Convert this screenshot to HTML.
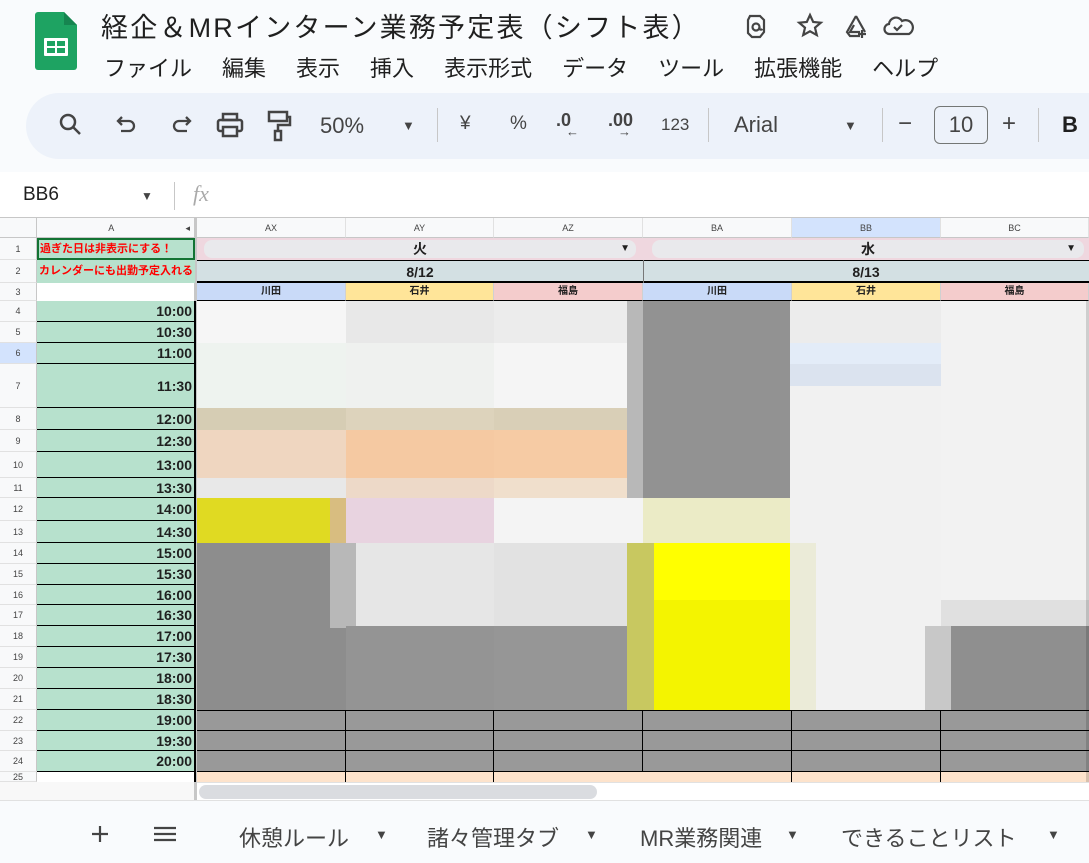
<!DOCTYPE html>
<html><head><meta charset="utf-8"><style>
*{margin:0;padding:0;box-sizing:border-box}
body{width:1089px;height:863px;overflow:hidden;background:#f9fbfd;font-family:"Liberation Sans","Noto Sans CJK JP",sans-serif;position:relative;color:#1f1f1f}
.a{position:absolute}
.t{font-size:27px;color:#1f1f1f;white-space:nowrap;letter-spacing:2.2px}
.m{font-size:22px;color:#1f1f1f;white-space:nowrap}
.m span{margin-right:30px}
.rh{position:absolute;left:0;width:37px;font-size:9px;color:#444;text-align:center;background:#f8f9fa;border-bottom:1px solid #e1e1e1;border-right:1px solid #c7c7c7;display:flex;align-items:center;justify-content:center}
.tm{position:absolute;left:37px;width:158px;background:#b7e1cd;border-bottom:1px solid #000;text-align:right;font-weight:bold;font-size:14px;padding-right:3px;display:flex;align-items:center;justify-content:flex-end}
.ch{position:absolute;top:218px;height:20px;font-size:9px;color:#444;text-align:center;line-height:20px;background:#f8f9fa;border-right:1px solid #e1e1e1;border-bottom:1px solid #c7c7c7}
.nm{position:absolute;top:283px;height:18px;font-size:10px;font-weight:bold;text-align:center;line-height:18px;border-right:1px solid #d0d0d0;border-bottom:1px solid #000}
.tab{position:absolute;top:821px;font-size:22px;color:#444;white-space:nowrap}
.tab i{font-style:normal;font-size:13px;position:absolute;top:6px}
</style></head><body>
<div class="a" style="left:35px;top:12px;width:42px;height:58px">
<svg width="42" height="58"><path d="M3 0h26l13 13v42a3 3 0 0 1-3 3H3a3 3 0 0 1-3-3V3a3 3 0 0 1 3-3z" fill="#1ea362"/><path d="M29 0v13h13z" fill="#168550"/><rect x="9" y="26" width="24" height="18" rx="1" fill="#fff"/><rect x="12" y="29" width="8" height="5" fill="#1ea362"/><rect x="22" y="29" width="8" height="5" fill="#1ea362"/><rect x="12" y="36" width="8" height="5" fill="#1ea362"/><rect x="22" y="36" width="8" height="5" fill="#1ea362"/></svg></div>
<div class="a t" style="left:101px;top:6px">経企＆MRインターン業務予定表（シフト表）</div>
<svg class="a" style="left:744px;top:12px" width="170" height="30" fill="none" stroke="#444" stroke-width="2.2">
<path d="M6 4h10l4 4v12l-4 5H8l-4-4V8z"/><circle cx="12" cy="15" r="3.5"/><path d="M15.5 15v2a2 2 0 0 0 3 0"/>
<path d="M66 3l3.2 7 7.6.7-5.8 5 1.8 7.4L66 19.3l-6.8 3.8 1.8-7.4-5.8-5 7.6-.7z"/>
<path d="M112 4l-9 16 3 4h10M112 4l9 16M110 13l-4 7h10"/><path d="M118 18v8M114 22h8"/>
<path d="M165 22h-19a5 5 0 0 1-1-10 7 7 0 0 1 13-3 6 6 0 0 1 7 13z"/><path d="M150 15l3 3 5-5"/>
</svg>
<div class="a m" style="left:104px;top:51px"><span>ファイル</span><span>編集</span><span>表示</span><span>挿入</span><span>表示形式</span><span>データ</span><span>ツール</span><span>拡張機能</span>ヘルプ</div>
<div class="a" style="left:26px;top:93px;width:1100px;height:66px;border-radius:33px;background:#edf2fa"></div>
<div class="a" style="left:58px;top:112px">
<svg width="26" height="26"><circle cx="10" cy="10" r="7" fill="none" stroke="#444" stroke-width="2.5"/><path d="M15 15l7 7" stroke="#444" stroke-width="2.5"/></svg></div>
<svg class="a" style="left:114px;top:113px" width="80" height="26" fill="none" stroke="#444" stroke-width="2.3"><path d="M4 8h11a5 5 0 0 1 0 10H7"/><path d="M8 4L4 8l4 4"/><path d="M76 8H65a5 5 0 0 0 0 10h8"/><path d="M72 4l4 4-4 4"/></svg>
<div class="a" style="left:216px;top:112px"><svg width="28" height="26"><rect x="7" y="2" width="14" height="6" fill="none" stroke="#444" stroke-width="2.5"/><rect x="2" y="8" width="24" height="11" rx="2" fill="none" stroke="#444" stroke-width="2.5"/><rect x="7" y="15" width="14" height="9" fill="#edf2fa" stroke="#444" stroke-width="2.5"/></svg></div>
<div class="a" style="left:266px;top:110px"><svg width="26" height="32"><rect x="3" y="2" width="18" height="9" fill="none" stroke="#444" stroke-width="2.5"/><path d="M21 7h3v8H12v6" fill="none" stroke="#444" stroke-width="2.5"/><rect x="9" y="21" width="6" height="9" fill="none" stroke="#444" stroke-width="2.5"/></svg></div>
<div class="a" style="left:320px;top:113px;font-size:22px;color:#444">50%</div>
<div class="a" style="left:402px;top:118px;font-size:13px;color:#444">▼</div>
<div class="a" style="left:437px;top:108px;width:1px;height:34px;background:#c7c7c7"></div>
<div class="a" style="left:460px;top:113px;font-size:19px;color:#444">¥</div>
<div class="a" style="left:510px;top:113px;font-size:19px;color:#444">%</div>
<div class="a" style="left:556px;top:110px;font-size:18px;color:#444;font-weight:bold">.0</div>
<div class="a" style="left:566px;top:124px;font-size:13px;color:#444">←</div>
<div class="a" style="left:608px;top:110px;font-size:18px;color:#444;font-weight:bold">.00</div>
<div class="a" style="left:618px;top:124px;font-size:13px;color:#444">→</div>
<div class="a" style="left:661px;top:115px;font-size:17px;color:#444">123</div>
<div class="a" style="left:708px;top:108px;width:1px;height:34px;background:#c7c7c7"></div>
<div class="a" style="left:734px;top:112px;font-size:22px;color:#444">Arial</div>
<div class="a" style="left:844px;top:118px;font-size:13px;color:#444">▼</div>
<div class="a" style="left:882px;top:108px;width:1px;height:34px;background:#c7c7c7"></div>
<div class="a" style="left:898px;top:110px;font-size:24px;color:#444">−</div>
<div class="a" style="left:934px;top:106px;width:54px;height:38px;border:1px solid #747775;border-radius:6px;font-size:22px;color:#444;text-align:center;line-height:36px">10</div>
<div class="a" style="left:1002px;top:110px;font-size:24px;color:#444">+</div>
<div class="a" style="left:1038px;top:108px;width:1px;height:34px;background:#c7c7c7"></div>
<div class="a" style="left:1062px;top:112px;font-size:22px;color:#1f1f1f;font-weight:bold">B</div>
<div class="a" style="left:0;top:172px;width:1089px;height:46px;background:#fff;border-bottom:1px solid #c7c7c7"></div>
<div class="a" style="left:23px;top:184px;font-size:19px">BB6</div>
<div class="a" style="left:141px;top:189px;font-size:12px;color:#444">▼</div>
<div class="a" style="left:174px;top:182px;width:1px;height:28px;background:#c7c7c7"></div>
<div class="a" style="left:193px;top:181px;font-size:22px;color:#aaa;font-style:italic;font-family:'Liberation Serif',serif">fx</div>
<div class="a" style="left:0;top:218px;width:1089px;height:564px;background:#fff"></div>
<div class="a" style="left:0;top:218px;width:37px;height:20px;background:#f8f9fa;border-right:1px solid #c7c7c7;border-bottom:1px solid #c7c7c7"></div>
<div class="ch" style="left:37px;width:158px">A<span style="float:right;margin-right:4px">◂</span></div>
<div class="ch" style="left:197px;width:149px">AX</div>
<div class="ch" style="left:346px;width:148px">AY</div>
<div class="ch" style="left:494px;width:149px">AZ</div>
<div class="ch" style="left:643px;width:149px">BA</div>
<div class="ch" style="left:792px;width:149px;background:#d3e3fd">BB</div>
<div class="ch" style="left:941px;width:148px">BC</div>
<div class="a" style="left:194px;top:218px;width:3px;height:582px;background:#c7c7c7"></div>
<div class="rh" style="top:238px;height:22px">1</div>
<div class="rh" style="top:260px;height:23px">2</div>
<div class="rh" style="top:283px;height:18px">3</div>
<div class="rh" style="top:301px;height:21px">4</div>
<div class="rh" style="top:322px;height:21px">5</div>
<div class="rh" style="top:343px;height:21px;background:#d3e3fd">6</div>
<div class="rh" style="top:364px;height:44px">7</div>
<div class="rh" style="top:408px;height:22px">8</div>
<div class="rh" style="top:430px;height:22px">9</div>
<div class="rh" style="top:452px;height:26px">10</div>
<div class="rh" style="top:478px;height:20px">11</div>
<div class="rh" style="top:498px;height:23px">12</div>
<div class="rh" style="top:521px;height:22px">13</div>
<div class="rh" style="top:543px;height:21px">14</div>
<div class="rh" style="top:564px;height:21px">15</div>
<div class="rh" style="top:585px;height:20px">16</div>
<div class="rh" style="top:605px;height:21px">17</div>
<div class="rh" style="top:626px;height:21px">18</div>
<div class="rh" style="top:647px;height:21px">19</div>
<div class="rh" style="top:668px;height:21px">20</div>
<div class="rh" style="top:689px;height:21px">21</div>
<div class="rh" style="top:710px;height:21px">22</div>
<div class="rh" style="top:731px;height:20px">23</div>
<div class="rh" style="top:751px;height:21px">24</div>
<div class="rh" style="top:772px;height:10px;align-items:flex-start;line-height:10px">25</div>
<div class="a" style="left:37px;top:238px;width:158px;height:22px;background:#b7e1cd;border:2px solid #137333;color:#f00;font-size:11px;font-weight:bold;line-height:18px;padding-left:1px;white-space:nowrap">過ぎた日は非表示にする！</div>
<div class="a" style="left:37px;top:260px;width:158px;height:23px;background:#b7e1cd;color:#f00;font-size:11px;font-weight:bold;line-height:23px;padding-left:2px;white-space:nowrap;overflow:hidden">カレンダーにも出勤予定入れる</div>
<div class="tm" style="top:301px;height:21px">10:00</div>
<div class="tm" style="top:322px;height:21px">10:30</div>
<div class="tm" style="top:343px;height:21px">11:00</div>
<div class="tm" style="top:364px;height:44px">11:30</div>
<div class="tm" style="top:408px;height:22px">12:00</div>
<div class="tm" style="top:430px;height:22px">12:30</div>
<div class="tm" style="top:452px;height:26px">13:00</div>
<div class="tm" style="top:478px;height:20px">13:30</div>
<div class="tm" style="top:498px;height:23px">14:00</div>
<div class="tm" style="top:521px;height:22px">14:30</div>
<div class="tm" style="top:543px;height:21px">15:00</div>
<div class="tm" style="top:564px;height:21px">15:30</div>
<div class="tm" style="top:585px;height:20px">16:00</div>
<div class="tm" style="top:605px;height:21px">16:30</div>
<div class="tm" style="top:626px;height:21px">17:00</div>
<div class="tm" style="top:647px;height:21px">17:30</div>
<div class="tm" style="top:668px;height:21px">18:00</div>
<div class="tm" style="top:689px;height:21px">18:30</div>
<div class="tm" style="top:710px;height:21px">19:00</div>
<div class="tm" style="top:731px;height:20px">19:30</div>
<div class="tm" style="top:751px;height:21px">20:00</div>
<div class="a" style="left:194px;top:301px;width:2px;height:481px;background:#000"></div>
<div class="a" style="left:197px;top:238px;width:446px;height:22px;background:#efd7df"></div>
<div class="a" style="left:204px;top:240px;width:432px;height:18px;background:#e9e9ec;border-radius:8px;text-align:center;font-weight:bold;font-size:14px;line-height:18px">火<span style="position:absolute;right:6px;font-size:10px">▼</span></div>
<div class="a" style="left:643px;top:238px;width:446px;height:22px;background:#efd7df"></div>
<div class="a" style="left:652px;top:240px;width:432px;height:18px;background:#e9e9ec;border-radius:8px;text-align:center;font-weight:bold;font-size:14px;line-height:18px">水<span style="position:absolute;right:8px;font-size:10px">▼</span></div>
<div class="a" style="left:197px;top:260px;width:892px;height:23px;background:#d3e0e3;border-top:1px solid #000;border-bottom:2px solid #000"></div>
<div class="a" style="left:643px;top:260px;width:1px;height:23px;background:#777"></div>
<div class="a" style="left:197px;top:262px;width:446px;text-align:center;font-weight:bold;font-size:14px;line-height:20px">8/12</div>
<div class="a" style="left:643px;top:262px;width:446px;text-align:center;font-weight:bold;font-size:14px;line-height:20px">8/13</div>
<div class="nm" style="left:197px;width:149px;background:#c9daf8">川田</div>
<div class="nm" style="left:346px;width:148px;background:#ffe599">石井</div>
<div class="nm" style="left:494px;width:149px;background:#f4cccc">福島</div>
<div class="nm" style="left:643px;width:149px;background:#c9daf8">川田</div>
<div class="nm" style="left:792px;width:149px;background:#ffe599">石井</div>
<div class="nm" style="left:941px;width:148px;background:#f4cccc">福島</div>
<div class="a" style="left:197px;top:301px;width:149px;height:42px;background:#f6f6f6"></div>
<div class="a" style="left:197px;top:343px;width:149px;height:65px;background:#eef3ef"></div>
<div class="a" style="left:197px;top:408px;width:149px;height:22px;background:#d6cdb4"></div>
<div class="a" style="left:197px;top:430px;width:149px;height:48px;background:#efd6c0"></div>
<div class="a" style="left:197px;top:478px;width:149px;height:20px;background:#e8e8e8"></div>
<div class="a" style="left:197px;top:498px;width:149px;height:45px;background:#e0da22"></div>
<div class="a" style="left:197px;top:543px;width:149px;height:167px;background:#8d8d8d"></div>
<div class="a" style="left:330px;top:498px;width:26px;height:45px;background:#d8bd80"></div>
<div class="a" style="left:330px;top:543px;width:26px;height:85px;background:#b8b8b8"></div>
<div class="a" style="left:346px;top:301px;width:148px;height:42px;background:#e8e8e8"></div>
<div class="a" style="left:346px;top:343px;width:148px;height:65px;background:#eff1ef"></div>
<div class="a" style="left:346px;top:408px;width:148px;height:22px;background:#ddd3bc"></div>
<div class="a" style="left:346px;top:430px;width:148px;height:48px;background:#f5c9a2"></div>
<div class="a" style="left:346px;top:478px;width:148px;height:20px;background:#edd9c8"></div>
<div class="a" style="left:346px;top:498px;width:148px;height:45px;background:#e8d3e0"></div>
<div class="a" style="left:356px;top:543px;width:138px;height:83px;background:#e6e6e6"></div>
<div class="a" style="left:346px;top:626px;width:148px;height:84px;background:#949494"></div>
<div class="a" style="left:494px;top:301px;width:149px;height:42px;background:#ececec"></div>
<div class="a" style="left:494px;top:343px;width:149px;height:65px;background:#f5f5f5"></div>
<div class="a" style="left:494px;top:408px;width:149px;height:22px;background:#d9cfb7"></div>
<div class="a" style="left:494px;top:430px;width:149px;height:48px;background:#f6cba4"></div>
<div class="a" style="left:494px;top:478px;width:149px;height:20px;background:#f0dfcc"></div>
<div class="a" style="left:494px;top:498px;width:149px;height:45px;background:#f4f4f4"></div>
<div class="a" style="left:494px;top:543px;width:149px;height:83px;background:#e2e2e2"></div>
<div class="a" style="left:494px;top:626px;width:149px;height:84px;background:#969696"></div>
<div class="a" style="left:627px;top:301px;width:27px;height:197px;background:#b8b8b8"></div>
<div class="a" style="left:627px;top:543px;width:27px;height:167px;background:#c8c860"></div>
<div class="a" style="left:643px;top:301px;width:149px;height:197px;background:#929292"></div>
<div class="a" style="left:643px;top:498px;width:149px;height:45px;background:#ebebc6"></div>
<div class="a" style="left:654px;top:543px;width:136px;height:167px;background:#ffff00"></div>
<div class="a" style="left:654px;top:600px;width:136px;height:110px;background:#f4f400"></div>
<div class="a" style="left:790px;top:301px;width:151px;height:42px;background:#ececec"></div>
<div class="a" style="left:790px;top:343px;width:151px;height:21px;background:#e3ecf8"></div>
<div class="a" style="left:790px;top:364px;width:151px;height:22px;background:#dbe3ef"></div>
<div class="a" style="left:790px;top:386px;width:151px;height:324px;background:#f1f1f1"></div>
<div class="a" style="left:790px;top:543px;width:26px;height:167px;background:#ebebd8"></div>
<div class="a" style="left:941px;top:301px;width:148px;height:325px;background:#f2f2f2"></div>
<div class="a" style="left:941px;top:600px;width:148px;height:26px;background:#e0e0e0"></div>
<div class="a" style="left:925px;top:626px;width:26px;height:84px;background:#c8c8c8"></div>
<div class="a" style="left:951px;top:626px;width:138px;height:84px;background:#8f8f8f"></div>
<div class="a" style="left:197px;top:710px;width:892px;height:62px;background:#999;border-top:1px solid #000"></div>
<div class="a" style="left:197px;top:730px;width:892px;height:1px;background:#000"></div>
<div class="a" style="left:197px;top:750px;width:892px;height:1px;background:#000"></div>
<div class="a" style="left:197px;top:771px;width:892px;height:1px;background:#000"></div>
<div class="a" style="left:197px;top:772px;width:892px;height:10px;background:#fde3cc"></div>
<div class="a" style="left:345px;top:710px;width:1px;height:72px;background:#000"></div>
<div class="a" style="left:493px;top:710px;width:1px;height:72px;background:#000"></div>
<div class="a" style="left:642px;top:710px;width:1px;height:62px;background:#000"></div>
<div class="a" style="left:791px;top:710px;width:1px;height:72px;background:#000"></div>
<div class="a" style="left:940px;top:710px;width:1px;height:72px;background:#000"></div>
<div class="a" style="left:1086px;top:301px;width:3px;height:481px;background:#000;opacity:.15"></div>
<div class="a" style="left:0;top:782px;width:1089px;height:18px;background:#fff;border-top:1px solid #e1e1e1"></div>
<div class="a" style="left:0;top:782px;width:194px;height:18px;background:#f8f8f8"></div>
<div class="a" style="left:194px;top:782px;width:3px;height:18px;background:#c7c7c7"></div>
<div class="a" style="left:199px;top:785px;width:398px;height:14px;border-radius:7px;background:#dadce0"></div>
<div class="a" style="left:0;top:800px;width:1089px;height:1px;background:#e1e1e1"></div>
<svg class="a" style="left:90px;top:824px" width="90" height="20" stroke="#444" stroke-width="2.2"><path d="M10 2v16M2 10h16"/><path d="M64 4h22M64 10h22M64 16h22"/></svg>
<div class="tab" style="left:239px">休憩ルール<i style="left:136px">▼</i></div>
<div class="tab" style="left:427px">諸々管理タブ<i style="left:158px">▼</i></div>
<div class="tab" style="left:640px">MR業務関連<i style="left:146px">▼</i></div>
<div class="tab" style="left:841px">できることリスト<i style="left:206px">▼</i></div>
</body></html>
